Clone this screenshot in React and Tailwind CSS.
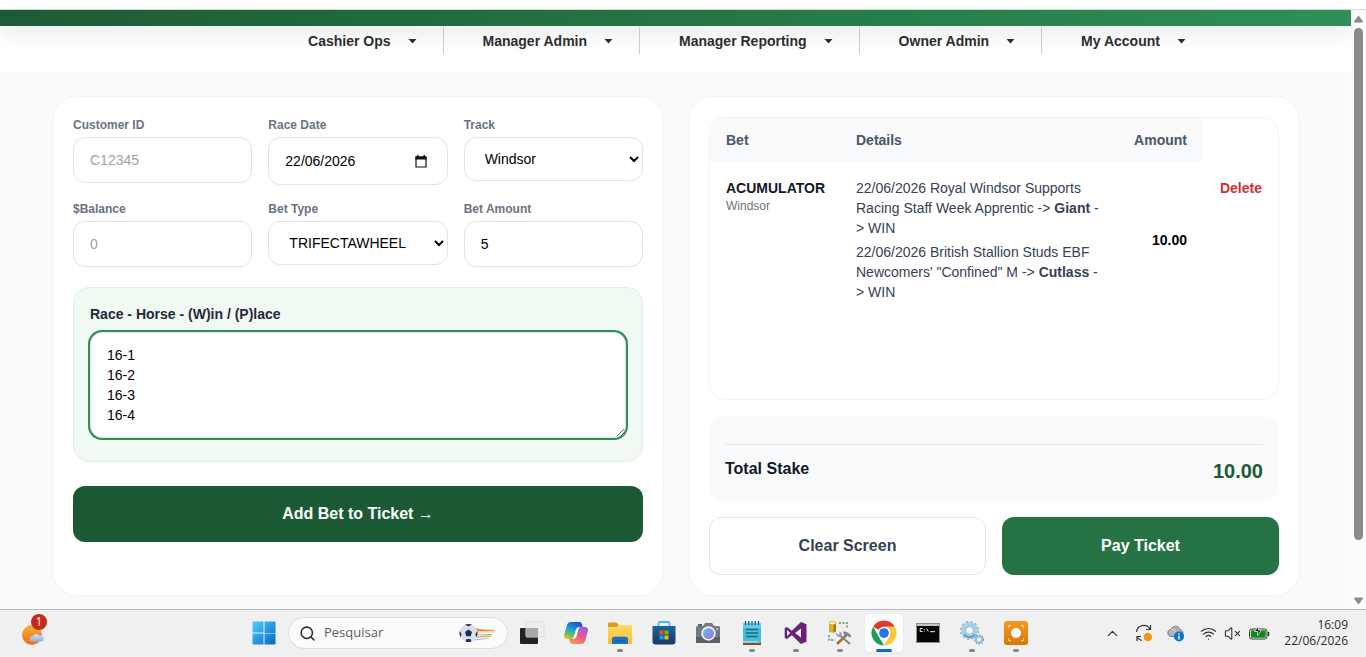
import { useState } from 'react';
import { ChevronUp, Search, Wifi, VolumeX } from 'lucide-react';

const menuItems = ['Cashier Ops', 'Manager Admin', 'Manager Reporting', 'Owner Admin', 'My Account'];

const legs = [
  { date: '22/06/2026', race: 'Royal Windsor Supports Racing Staff Week Apprentic', horse: 'Giant', type: 'WIN' },
  { date: '22/06/2026', race: 'British Stallion Studs EBF Newcomers\' "Confined" M', horse: 'Cutlass', type: 'WIN' },
];

const fieldClass = 'block w-full rounded-xl border border-[#e3e4e8] bg-white px-4 py-3 text-sm text-black placeholder:text-gray-400 focus:outline-none';

const Field = ({ id, label, children }) => (
  <div className="min-w-0">
    <label htmlFor={id} className="block text-xs font-bold text-gray-500 mb-1">{label}</label>
    {children}
  </div>
);

/* Taskbar icons */
const WeatherIcon = () => (
  <svg width="28" height="30" viewBox="0 0 28 30">
    <defs>
      <linearGradient id="sun" x1="0" y1="0" x2="0" y2="1">
        <stop offset="0" stopColor="#f6b035" />
        <stop offset="1" stopColor="#e8701c" />
      </linearGradient>
      <linearGradient id="cloud" x1="0" y1="0" x2="0" y2="1">
        <stop offset="0" stopColor="#d5e3f8" />
        <stop offset="1" stopColor="#8fb0e2" />
      </linearGradient>
    </defs>
    <circle cx="12" cy="17" r="10" fill="url(#sun)" />
    <path d="M12.500 23.500a2.600 2.600 0 0 1 0-5.200a4 4 0 0 1 7-.6a3 3 0 0 1 2.500 5.800z" fill="url(#cloud)" />
  </svg>
);

const StartIcon = () => (
  <svg width="24" height="24" viewBox="0 0 24 24">
    <defs>
      <linearGradient id="win" x1="0" y1="0" x2="1" y2="1">
        <stop offset="0" stopColor="#4fd0fb" />
        <stop offset="1" stopColor="#0067c9" />
      </linearGradient>
    </defs>
    <path d="M1 .5h10.500v11H.5V1zM12.500 .5H23l.5.500v11h-11zM.5 12.500h11v11H1l-.5-.5zM12.500 12.500h11V23l-.5.500H12.500z" fill="url(#win)" />
  </svg>
);

const FootballIcon = () => (
  <svg width="40" height="20" viewBox="0 0 40 20">
    <path d="M14 3.500C23 9 29 5 39 8C30 7 23 11 14 6z" fill="#ef7b45" />
    <path d="M16 8c7 3 12-.5 20 1" stroke="#f8d3b0" strokeWidth="1.600" fill="none" />
    <path d="M17 11c6 2 10 0 16 .5" stroke="#8fc577" strokeWidth="1" fill="none" />
    <path d="M16 13.500c6 1 10-.5 16-.5" stroke="#f3a24e" strokeWidth="1.300" fill="none" />
    <path d="M14 16.500c6 1 10-1 16-1.500" stroke="#9cc3ea" strokeWidth="1.200" fill="none" />
    <circle cx="9.500" cy="10" r="9" fill="#d9dee7" />
    <path d="M9.500 6.500l3.500 2.600-1.300 4.100H7.300L6 9.100z" fill="#1c2f5a" />
    <path d="M6 1.800l3.500 1.400L13 1.800A9 9 0 0 0 6 1.800zM.7 8L2.500 11l-.8 3.500A9 9 0 0 1 .7 8zM18.300 8L16.500 11l.8 3.500a9 9 0 0 0 1-6.500zM6.500 18.400L7.500 16h4l1 2.400a9 9 0 0 1-6 0z" fill="#1c2f5a" />
  </svg>
);

const TaskViewIcon = () => (
  <svg width="26" height="24" viewBox="0 0 26 24">
    <rect x="1" y="7" width="18" height="16" rx="1" fill="#222" />
    <rect x="7" y="1" width="18" height="15" rx="1" fill="#ededed" stroke="#e0e0e0" />
    <path d="M7 7h12v9H7z" fill="#a9a9a9" />
  </svg>
);

const CopilotIcon = () => (
  <svg width="26" height="24" viewBox="0 0 26 24">
    <defs>
      <linearGradient id="cpA" x1=".6" y1="0" x2=".2" y2="1">
        <stop offset="0" stopColor="#1f4fd8" />
        <stop offset=".5" stopColor="#1fb0c8" />
        <stop offset=".8" stopColor="#7bc043" />
        <stop offset="1" stopColor="#f2c530" />
      </linearGradient>
      <linearGradient id="cpB" x1=".8" y1="0" x2=".2" y2="1">
        <stop offset="0" stopColor="#9a5be8" />
        <stop offset=".5" stopColor="#ec5a8e" />
        <stop offset="1" stopColor="#f89a4a" />
      </linearGradient>
    </defs>
    <path d="M8 1h8.500c1.500 0 2.200 1 2.600 2.400l.9 3.100h-4c-1.600 0-2.600 1-3.100 2.600L11 15.500C10.500 17 9.500 18 8 18H4c-2.500 0-3.500-2-2.800-4.500L4 4c.6-2 2-3 4-3z" fill="url(#cpA)" />
    <path d="M18 23H9.500c-1.500 0-2.200-1-2.600-2.400L6 17.500h4c1.600 0 2.600-1 3.100-2.600L15 8.500C15.500 7 16.500 6 18 6h4c2.500 0 3.500 2 2.800 4.500L22 20c-.6 2-2 3-4 3z" fill="url(#cpB)" />
    <path d="M12.900 9.100C13.400 7.500 14.400 6.500 16 6.500h1.500C16.500 6.800 15.900 7.500 15.500 8.500l-1.900 6.400c-.5 1.600-1.500 2.600-3.100 2.600H9c1-.3 1.600-1 2-2z" fill="#fff" />
  </svg>
);

const FolderIcon = () => (
  <svg width="26" height="24" viewBox="0 0 26 24">
    <defs>
      <linearGradient id="fold" x1="0" y1="0" x2="0" y2="1">
        <stop offset="0" stopColor="#fddc6a" />
        <stop offset="1" stopColor="#f6bd2f" />
      </linearGradient>
    </defs>
    <path d="M1 3c0-1 .5-1.500 1.500-1.500h7L12 4h11.500c1 0 1.500.5 1.500 1.500V8H1z" fill="#d89e1d" />
    <path d="M1 6h8.500L12 4h12c.7 0 1 .4 1 1v16.500c0 .9-.4 1.500-1.200 1.500H2.200C1.400 23 1 22.400 1 21.500z" fill="url(#fold)" />
    <path d="M5 23v-5c0-1.500.8-2.300 2.200-2.300h11.600c1.400 0 2.200.8 2.200 2.300v5z" fill="#1972c4" />
    <path d="M8 20h10" stroke="#1160a8" strokeWidth="1.500" />
  </svg>
);

const StoreIcon = () => (
  <svg width="24" height="24" viewBox="0 0 24 24">
    <defs>
      <linearGradient id="store" x1="0" y1="0" x2="0" y2="1">
        <stop offset="0" stopColor="#1f639f" />
        <stop offset="1" stopColor="#183861" />
      </linearGradient>
    </defs>
    <path d="M6.500 7V2.500C6.500 1.500 7 1 8 1h8c1 0 1.500.5 1.500 1.500V7" fill="none" stroke="#4cb9ee" strokeWidth="1.800" />
    <path d="M.5 5h23v15.500c0 2-1 3-3 3h-17c-2 0-3-1-3-3z" fill="url(#store)" />
    <path d="M7.500 9.500h4v4h-4z" fill="#f25022" />
    <path d="M12.500 9.500h4v4h-4z" fill="#7fba00" />
    <path d="M7.500 14.500h4v4h-4z" fill="#00a4ef" />
    <path d="M12.500 14.500h4v4h-4z" fill="#ffb900" />
  </svg>
);

const CameraIcon = () => (
  <svg width="26" height="24" viewBox="0 0 26 24">
    <defs>
      <linearGradient id="lens" x1="0" y1="0" x2="1" y2="1">
        <stop offset="0" stopColor="#58c4ee" />
        <stop offset="1" stopColor="#a768dd" />
      </linearGradient>
    </defs>
    <path d="M3 3h4v2H3z" fill="#5a6067" />
    <path d="M2.500 5H8l2-3h7l2 3h4.500c1 0 1.500.5 1.500 1.500v14c0 1-.5 1.500-1.500 1.500h-21c-1 0-1.500-.5-1.500-1.500v-14C1 5.500 1.500 5 2.500 5z" fill="#727980" />
    <path d="M1 16h24v4.500c0 1-.5 1.500-1.500 1.500h-21c-1 0-1.500-.5-1.500-1.500z" fill="#596067" />
    <circle cx="13.500" cy="12.500" r="7.200" fill="#f2f4f7" />
    <circle cx="13.500" cy="12.500" r="5.500" fill="url(#lens)" />
    <circle cx="22.300" cy="8" r="1" fill="#cfd4d9" />
  </svg>
);

const NotepadIcon = () => (
  <svg width="20" height="26" viewBox="0 0 20 26">
    <path d="M1 3.500h18V23H1z" fill="#45bede" />
    <path d="M1 3.500h18V8H1z" fill="#67cde7" />
    <path d="M3.500 1v4M6.750 1v4M10 1v4M13.250 1v4M16.500 1v4" stroke="#17597c" strokeWidth="1.300" />
    <path d="M4 9.500h12M4 13h12M4 16.500h12" stroke="#17698d" strokeWidth="1.500" />
    <path d="M1 22.500h18V25H1z" fill="#85502b" />
    <path d="M1 21.500h14l4 1H1z" fill="#eef5f7" />
  </svg>
);

const VisualStudioIcon = () => (
  <svg width="24" height="24" viewBox="0 0 24 24">
    <path d="M17 1l5.500 2.300v17.400L17 23 7.800 14.300 3 18l-2.300-1V7L3 6l4.800 3.700zM17 7.500L11 12l6 4.500zM3 8.800v6.400L6.200 12z" fill="#68217a" fillRule="evenodd" />
  </svg>
);

const SqlToolsIcon = () => (
  <svg width="26" height="26" viewBox="0 0 26 26">
    <path d="M12 3h8v6M2 15v5h6" fill="none" stroke="#3d9a3a" strokeWidth="1.300" strokeDasharray="2 1.500" />
    <path d="M2 3v8c0 2 7 2 7 0V3z" fill="#e0ae2a" />
    <path d="M6.500 3v9.300C8 12.200 9 11.700 9 11V3z" fill="#a97709" />
    <ellipse cx="5.500" cy="3" rx="3.500" ry="1.700" fill="#fff2b0" stroke="#c09025" strokeWidth=".5" />
    <path d="M10 24L20 14.500" stroke="#a86f2a" strokeWidth="2.500" />
    <path d="M12 14.500l11 9.500" stroke="#7d8791" strokeWidth="2.200" />
    <path d="M16 11.500c3-.5 6 1 8.500 4.500l-2 1.500c-2-2-3.500-2.500-5-1.500z" fill="#76889b" />
    <path d="M9 12.500l2 2.500 2-1.500-1-2c2 .2 3.500 2 2.500 4s-4 1.800-5 0c-.8-1.200-.8-2.200-.5-3z" fill="#96a1ad" />
  </svg>
);

const ChromeIcon = () => (
  <svg width="26" height="26" viewBox="0 0 48 48">
    <path d="M24 24L4 12.500A23 23 0 0 1 44 12.500H24z" fill="#dd3b30" />
    <path d="M4 12.500L14 30 24 47A23 23 0 0 1 4 12.500z" fill="#1f9d55" />
    <path d="M44 12.500A23 23 0 0 1 24 47l10-17.200c3-5 1.500-13-6-17.300z" fill="#fcc934" />
    <circle cx="24" cy="24" r="11.500" fill="#fff" />
    <circle cx="24" cy="24" r="9" fill="#2a74e8" />
  </svg>
);

const TerminalIcon = () => (
  <svg width="24" height="20" viewBox="0 0 24 20">
    <rect x=".5" y=".5" width="23" height="19" fill="#050505" stroke="#8d9196" />
    <path d="M1 1h22v2H1z" fill="#c2c6ca" />
    <path d="M6.500 5.500H4.200v3h2.300M8.500 6.200v.6M8.500 8v.6M10.500 5.500l1.800 3M14 8.700h5" fill="none" stroke="#eee" strokeWidth="1" />
  </svg>
);

const GearsIcon = () => (
  <svg width="26" height="26" viewBox="0 0 26 26">
    <circle cx="10.500" cy="10.500" r="8.500" fill="none" stroke="#a0b4c5" strokeWidth="2" strokeDasharray="2.500 2" />
    <circle cx="10.500" cy="10.500" r="6.300" fill="none" stroke="#a9cfe9" strokeWidth="4" />
    <path d="M5 14.500a7 7 0 0 0 11 0" fill="none" stroke="#4b91c2" strokeWidth="1.500" />
    <circle cx="10.500" cy="10.500" r="4" fill="#eef6fb" stroke="#6e9bb9" strokeWidth=".7" />
    <circle cx="20" cy="19.500" r="4.300" fill="none" stroke="#7893a7" strokeWidth="1.500" strokeDasharray="1.600 1.200" />
    <circle cx="20" cy="19.500" r="3" fill="#eef6fb" stroke="#9cc1d9" strokeWidth="2" />
  </svg>
);

const CaptureIcon = () => (
  <svg width="26" height="26" viewBox="0 0 26 26">
    <defs>
      <linearGradient id="capture" x1="0" y1="0" x2="0" y2="1">
        <stop offset="0" stopColor="#f49a20" />
        <stop offset="1" stopColor="#df7508" />
      </linearGradient>
    </defs>
    <rect x="1" y="1" width="24" height="24" rx="3" fill="url(#capture)" />
    <circle cx="13" cy="13" r="5" fill="#fff" />
    <path d="M5.500 8V5.500H8M18 5.500h2.500V8M20.500 18v2.500H18M8 20.500H5.500V18" fill="none" stroke="#fbdcae" strokeWidth="1" />
  </svg>
);

const SyncIcon = () => (
  <svg width="18" height="18" viewBox="0 0 18 18">
    <path d="M1.500 8a7.300 7.300 0 0 1 13.500-3M15.500 1v4.500H11M7 16.500c-2-.4-3.500-1.500-4.500-3M2 17v-4.500h4" fill="none" stroke="#333" strokeWidth="1.200" />
    <circle cx="12.800" cy="13" r="4.200" fill="#f8950f" />
  </svg>
);

const OneDriveIcon = () => (
  <svg width="18" height="18" viewBox="0 0 18 18">
    <path d="M5 12.500c-2.500 0-4.200-1.500-4.200-3.600 0-2 1.300-3.500 3.200-3.600C5 3 7 2 9 2.300c2.200.3 3.700 1.600 4.200 3.500 1.800.4 2.800 1.500 2.800 3.200v3.500z" fill="#b2b2b2" stroke="#666" strokeWidth=".8" />
    <path d="M4 5.300c2 0 3 .7 5 2.200" fill="none" stroke="#e2e2e2" />
    <circle cx="12" cy="12.500" r="5" fill="#0a75d1" />
    <path d="M12 11.500v4M12 9.300v1.200" stroke="#fff" strokeWidth="1.400" />
  </svg>
);

const BatteryIcon = () => (
  <svg width="22" height="16" viewBox="0 0 22 16">
    <rect x="1.500" y="4" width="17.500" height="10" rx="2.500" fill="#fff" stroke="#333" />
    <rect x="2.800" y="5.300" width="15" height="7.400" rx="1" fill="#118a14" />
    <path d="M20.500 7v4" stroke="#333" strokeWidth="1.500" />
    <path d="M10.800 .5L6.500 6.500h3.300L9.500 10.500 13.500 5H10.300z" fill="#222" stroke="#fff" strokeWidth=".7" />
  </svg>
);

const apps = [
  { name: 'Task view', icon: <TaskViewIcon /> },
  { name: 'Copilot', icon: <CopilotIcon /> },
  { name: 'File Explorer', icon: <FolderIcon />, running: true },
  { name: 'Store', icon: <StoreIcon /> },
  { name: 'Camera', icon: <CameraIcon /> },
  { name: 'Notepad', icon: <NotepadIcon />, running: true },
  { name: 'Visual Studio', icon: <VisualStudioIcon />, running: true },
  { name: 'SQL tools', icon: <SqlToolsIcon />, running: true },
  { name: 'Chrome', icon: <ChromeIcon />, active: true },
  { name: 'Command prompt', icon: <TerminalIcon /> },
  { name: 'Services', icon: <GearsIcon />, running: true },
  { name: 'Screen capture', icon: <CaptureIcon />, running: true },
];

const Header = () => (
  <header className="bg-white">
    <div className="relative z-10 h-4 bg-linear-to-r from-[#1c5b35] to-[#2e8f58] shadow-[0_8px_20px_-2px_rgba(0,0,0,0.12)]" />
    <nav className="flex justify-center pl-[130px] pt-px h-[46px]">
      {menuItems.map((item) => (
        <button
          key={item}
          type="button"
          className="relative z-20 h-[27px] flex items-center gap-[17px] pl-[39px] pr-[26px] text-sm font-bold text-[#2b2d2f] border-r border-[#c9cccf] last:border-r-0"
        >
          {item}
          <svg width="9" height="7" viewBox="0 0 9 7"><path d="M.5 2h8l-4 4.500z" fill="currentColor" /></svg>
        </button>
      ))}
    </nav>
  </header>
);

const BetForm = () => {
  const [track, setTrack] = useState('Windsor');
  const [betType, setBetType] = useState('TRIFECTAWHEEL');

  return (
    <section className="flex-1 min-w-0 bg-white rounded-3xl ring-1 ring-[#f1f3f5] p-5">
      <div className="grid grid-cols-3 gap-4">
        <Field id="customer" label="Customer ID">
          <input id="customer" type="text" placeholder="C12345" className={fieldClass} />
        </Field>
        <Field id="raceDate" label="Race Date">
          <div className="flex items-center h-12 rounded-xl border border-[#e3e4e8] bg-white pl-4 pr-5">
            <input id="raceDate" type="text" defaultValue="22/06/2026" className="min-w-0 flex-1 text-sm text-black focus:outline-none" />
            <button type="button" aria-label="Pick a date">
              <svg width="12" height="13" viewBox="0 0 12 13">
                <path d="M1 2h10v10H1z" fill="none" stroke="#111" strokeWidth="1.200" />
                <path d="M.5 1.500h11v3H.5zM2 0h1.500v2H2zM8.500 0H10v2H8.500z" fill="#111" />
              </svg>
            </button>
          </div>
        </Field>
        <Field id="track" label="Track">
          <select id="track" value={track} onChange={(e) => setTrack(e.target.value)} className="block w-full h-11 rounded-xl border border-[#e3e4e8] bg-white px-4 text-sm text-black">
            <option>Windsor</option>
          </select>
        </Field>
        <Field id="balance" label="$Balance">
          <input id="balance" type="text" placeholder="0" className={fieldClass} />
        </Field>
        <Field id="betType" label="Bet Type">
          <select id="betType" value={betType} onChange={(e) => setBetType(e.target.value)} className="block w-full h-11 rounded-xl border border-[#e3e4e8] bg-white px-4 text-sm text-black">
            <option>TRIFECTAWHEEL</option>
          </select>
        </Field>
        <Field id="betAmount" label="Bet Amount">
          <input id="betAmount" type="text" defaultValue="5" className={fieldClass} />
        </Field>
      </div>

      <div className="mt-5 rounded-2xl border border-[#dff0e5] bg-[#f0f9f2] px-4 pt-4 pb-[23px]">
        <label htmlFor="selections" className="block text-sm font-bold text-gray-800 mb-2">Race - Horse - (W)in / (P)lace</label>
        <textarea
          id="selections"
          rows={4}
          defaultValue={'16-1\n16-2\n16-3\n16-4'}
          className="block w-full rounded-xl border border-[#d8ebdf] bg-white ring-2 ring-[#388a5b] px-4 py-3 text-sm text-black focus:outline-none"
        />
      </div>

      <button type="button" className="mt-6 w-full h-14 rounded-xl bg-[#1c5a35] text-base font-bold text-white">
        Add Bet to Ticket →
      </button>
    </section>
  );
};

const Ticket = () => (
  <section className="flex-1 min-w-0 flex flex-col gap-4 bg-white rounded-3xl ring-1 ring-[#f1f3f5] p-5">
    <div className="min-h-[283px] rounded-2xl border border-[#f1f3f5] overflow-hidden">
      <table className="w-full table-fixed text-sm">
        <thead>
          <tr className="text-gray-600">
            <th className="w-[130px] bg-[#f8fafc] px-4 py-3 text-left font-bold">Bet</th>
            <th className="bg-[#f8fafc] px-4 py-3 text-left font-bold">Details</th>
            <th className="w-[84px] bg-[#f8fafc] pr-4 py-3 text-right font-bold">Amount</th>
            <td className="w-[75px]" />
          </tr>
        </thead>
        <tbody>
          <tr>
            <td className="px-4 py-4 align-top">
              <div className="font-bold text-gray-900">ACUMULATOR</div>
              <div className="text-xs text-gray-500">Windsor</div>
            </td>
            <td className="px-4 py-4 align-top text-gray-700 space-y-1">
              {legs.map((leg) => (
                <div key={leg.horse}>
                  {`${leg.date} ${leg.race} -> `}
                  <strong>{leg.horse}</strong>
                  {` -> ${leg.type}`}
                </div>
              ))}
            </td>
            <td className="pr-4 py-4 text-right font-bold text-black">10.00</td>
            <td className="px-4 py-4 align-top text-right">
              <button type="button" className="font-bold text-[#d32f2f]">Delete</button>
            </td>
          </tr>
        </tbody>
      </table>
    </div>

    <div className="rounded-2xl bg-[#f8fafc] px-4 pt-7 pb-4">
      <div className="flex items-start justify-between border-t border-gray-200 pt-3">
        <span className="text-base font-bold text-gray-900">Total Stake</span>
        <span className="text-xl font-bold text-[#1c5a35]">10.00</span>
      </div>
    </div>

    <div className="grid grid-cols-2 gap-4">
      <button type="button" className="h-[58px] rounded-xl border border-gray-200 bg-white text-base font-bold text-gray-700">Clear Screen</button>
      <button type="button" className="h-[58px] rounded-xl bg-[#257245] text-base font-bold text-white">Pay Ticket</button>
    </div>
  </section>
);

const Scrollbar = () => (
  <div className="w-[15px] shrink-0 flex flex-col items-center bg-[#fcfcfc] pt-[5px] pb-1 text-[#8b8b8b]">
    <svg width="9" height="8" viewBox="0 0 9 8"><path d="M4.500 .5L9 6.500 8.500 7.500H.5L0 6.500z" fill="currentColor" /></svg>
    <div className="mt-[5px] w-[9px] grow-9 basis-0 rounded-full bg-[#8b8b8b]" />
    <div className="grow basis-0" />
    <svg width="9" height="8" viewBox="0 0 9 8"><path d="M4.500 7.500L9 1.500 8.500 .5H.5L0 1.500z" fill="currentColor" /></svg>
  </div>
);

const Taskbar = () => (
  <footer className="h-12 shrink-0 flex items-center border-t border-[#b9b9bb] bg-[#f0f0f1] pb-px font-['Open_Sans',sans-serif] text-[#2c2c2c]">
    <div className="w-[242px] shrink-0 pl-5">
      <button type="button" aria-label="Weather" className="relative block">
        <WeatherIcon />
        <span className="absolute left-[11px] -top-1 w-4 h-4 rounded-full bg-[#c42b1c] text-white text-xs leading-4 text-center">1</span>
      </button>
    </div>

    <div className="flex items-center">
      <button type="button" aria-label="Start" className="w-11 flex justify-center"><StartIcon /></button>
      <div className="mx-[2px] w-[220px] h-8 flex items-center gap-2 rounded-full border border-[#dcdcdc] bg-[#fbfbfb] pl-[10px] pr-2">
        <Search size={17} strokeWidth={2.2} className="shrink-0" />
        <input type="text" aria-label="Pesquisar" placeholder="Pesquisar" className="min-w-0 flex-1 text-[13px] placeholder:text-[#5c5c5c] focus:outline-none" />
        <FootballIcon />
      </div>
      {apps.map((app) => (
        <div key={app.name} className="w-11 flex justify-center">
          <button
            type="button"
            aria-label={app.name}
            className={`relative w-[38px] h-[38px] flex items-center justify-center rounded-sm ${app.active ? 'bg-[#fcfcfc] shadow-xs' : ''}`}
          >
            {app.icon}
            {app.running && <span className="absolute bottom-0 left-4 w-[6px] h-[3px] rounded-full bg-[#868686]" />}
            {app.active && <span className="absolute bottom-0 left-[11px] w-4 h-[3px] rounded-full bg-[#0a6fc2]" />}
          </button>
        </div>
      ))}
    </div>

    <div className="ml-auto flex items-center pr-[18px]">
      <button type="button" aria-label="Show hidden icons" className="w-8 flex justify-center"><ChevronUp size={17} strokeWidth={1.600} /></button>
      <button type="button" aria-label="Sync" className="w-8 flex justify-center"><SyncIcon /></button>
      <button type="button" aria-label="OneDrive" className="w-8 flex justify-center"><OneDriveIcon /></button>
      <button type="button" aria-label="Network, sound and battery" className="flex items-center gap-[7px] ml-2 mr-[14px]">
        <Wifi size={17} strokeWidth={1.600} />
        <VolumeX size={17} strokeWidth={1.500} />
        <BatteryIcon />
      </button>
      <div className="text-right text-xs">
        <div>16:09</div>
        <div>22/06/2026</div>
      </div>
    </div>
  </footer>
);

const App = () => (
  <div className="min-h-screen flex flex-col bg-white font-['Liberation_Sans',Arial,sans-serif]">
    <div className="h-[10px] shrink-0 border-b border-[#d3ddd7]" />
    <div className="flex-1 flex">
      <div className="flex-1 min-w-0 bg-[#f8fafc]">
        <Header />
        <main className="flex gap-[26px] pl-[53px] pr-[52px] pt-[25px] pb-3">
          <BetForm />
          <Ticket />
        </main>
      </div>
      <Scrollbar />
    </div>
    <Taskbar />
  </div>
);

export default App;
